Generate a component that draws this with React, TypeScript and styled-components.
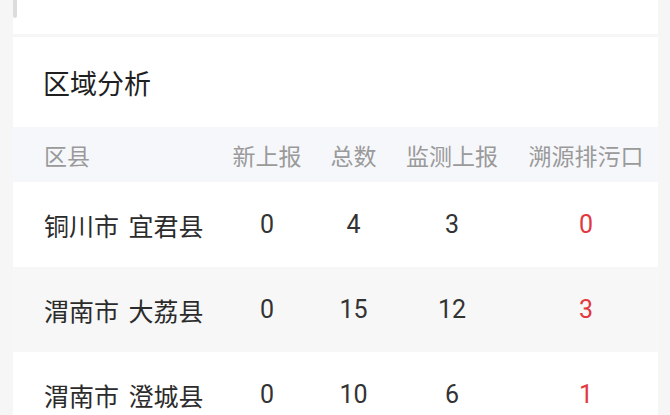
import React from 'react';
import styled, { createGlobalStyle } from 'styled-components';

const GlobalStyle = createGlobalStyle`
  html, body {
    margin: 0;
    padding: 0;
    background: #f6f6f6;
    font-family: 'Noto Sans CJK SC', 'Noto Sans', sans-serif;
  }
`;

const Page = styled.div`
  width: 670px;
  height: 415px;
  overflow: hidden;
  padding: 0 12px 0 13px;
  box-sizing: border-box;
  display: flex;
  flex-direction: column;
  gap: 3px;
`;

const TopCard = styled.div`
  height: 34px;
  flex-shrink: 0;
  background: #fff;
  display: flex;
`;

const Marker = styled.div`
  width: 4px;
  height: 18px;
  background: #dcdcdc;
  border-radius: 0 0 2px 2px;
`;

const Card = styled.div`
  flex-shrink: 0;
  background: #fff;
  display: flex;
  flex-direction: column;
`;

const Title = styled.div`
  height: 90px;
  display: flex;
  align-items: center;
  padding-left: 30px;
  font-size: 27px;
  font-weight: 400;
  color: #1f1f1f;
`;

const Row = styled.div<{ $bg?: string; $h: number }>`
  display: grid;
  grid-template-columns: 1fr 70px 47px 94px 118px;
  column-gap: 28px;
  align-items: center;
  padding: 0 13px 0 31px;
  height: ${(p) => p.$h}px;
  flex-shrink: 0;
  background: ${(p) => p.$bg || '#fff'};
`;

const HeadCell = styled.div`
  font-size: 23px;
  color: #9a9a9a;
  white-space: nowrap;
  text-align: center;
  &:first-child {
    text-align: left;
  }
`;

const NameCell = styled.div`
  font-size: 25px;
  color: #2b2b2b;
  white-space: nowrap;
  word-spacing: 4px;
`;

const NumCell = styled.div<{ $red?: boolean }>`
  font-family: Roboto, 'Noto Sans', sans-serif;
  font-size: 25px;
  color: ${(p) => (p.$red ? '#e2383f' : '#333')};
  text-align: center;
`;

const rows = [
  { name: '铜川市 宜君县', n: [0, 4, 3, 0] },
  { name: '渭南市 大荔县', n: [0, 15, 12, 3] },
  { name: '渭南市 澄城县', n: [0, 10, 6, 1] },
];

export default function App() {
  return (
    <>
      <GlobalStyle />
      <Page>
        <TopCard>
          <Marker />
        </TopCard>
        <Card>
          <Title>区域分析</Title>
          <Row $bg="#f6f7fa" $h={55}>
            <HeadCell>区县</HeadCell>
            <HeadCell>新上报</HeadCell>
            <HeadCell>总数</HeadCell>
            <HeadCell>监测上报</HeadCell>
            <HeadCell>溯源排污口</HeadCell>
          </Row>
          {rows.map((r, i) => (
            <Row key={r.name} $h={85} $bg={i % 2 === 1 ? '#f7f7f7' : '#fff'}>
              <NameCell>{r.name}</NameCell>
              {r.n.map((v, j) => (
                <NumCell key={j} $red={j === 3}>
                  {v}
                </NumCell>
              ))}
            </Row>
          ))}
        </Card>
      </Page>
    </>
  );
}
